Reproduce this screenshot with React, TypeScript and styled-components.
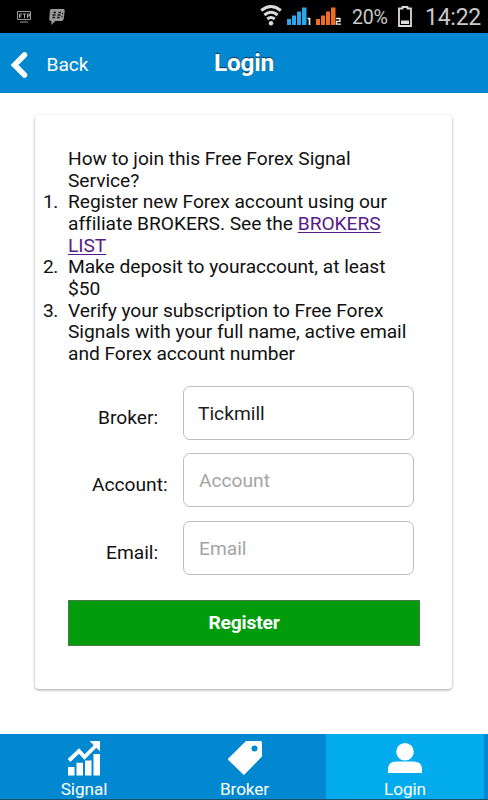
import React from "react";
import styled, { createGlobalStyle } from "styled-components";

const GlobalStyle = createGlobalStyle`
  * { box-sizing: border-box; }
  body { margin: 0; background: #fff; font-family: Roboto, sans-serif; color: #111; }
`;

const Screen = styled.div`
  width: 488px;
  height: 800px;
  display: flex;
  flex-direction: column;
  overflow: hidden;
`;

const StatusBar = styled.div`
  height: 33px;
  flex: none;
  background: #000;
  display: flex;
  justify-content: space-between;
  color: #c9c9c9;
`;

const StatusGroup = styled.div`
  display: flex;
  svg { display: block; flex: none; }
`;

const StatusText = styled.span<{ $size: number; $left: number; $width: number }>`
  font-size: ${(p) => p.$size}px;
  line-height: 35px;
  letter-spacing: -0.25px;
  margin-left: ${(p) => p.$left}px;
  width: ${(p) => p.$width}px;
  white-space: nowrap;
`;

const Header = styled.header`
  height: 60px;
  flex: none;
  background: #0288d1;
  border-bottom: 1px solid #0784cb;
  color: #fff;
  display: grid;
  grid-template-columns: 1fr auto 1fr;
`;

const BackButton = styled.button`
  border: 0;
  padding: 1px 0 0 10px;
  background: none;
  color: #fff;
  display: flex;
  align-items: center;
  gap: 18.5px;
  font: 400 19.2px/61px Roboto, sans-serif;
  letter-spacing: -0.05px;
`;

const Title = styled.h1`
  margin: 0;
  font-size: 24.4px;
  line-height: 59px;
  letter-spacing: -0.2px;
  font-weight: 700;
  text-shadow: 0 -1px 1px #12324a;
`;

const Card = styled.main`
  width: 417px;
  height: 574px;
  margin: 22px 0 0 35px;
  padding: 33px 33px 0;
  border-radius: 4px;
  box-shadow: 0 1px 3px rgba(0, 0, 0, 0.38);
  flex: none;
`;

const Instructions = styled.div`
  font-size: 19.2px;
  letter-spacing: -0.035px;
  line-height: 21.67px;
  white-space: nowrap;
  p { margin: 0; }
`;

const Steps = styled.ol`
  margin: 0;
  padding: 0;
  list-style: none;
`;

const Step = styled.li`
  display: grid;
  grid-template-columns: 25px 1fr;
  margin-left: -25px;
`;

const Marker = styled.span`
  letter-spacing: -0.6px;
`;

const Line = styled.span`
  display: block;
`;

const BrokerLink = styled.a`
  color: #551a8b;
  text-decoration: underline;
  text-decoration-thickness: 1px;
  text-underline-offset: 2px;
`;

const Form = styled.form`
  margin-top: 21px;
  display: grid;
  gap: 13.7px;
`;

const Field = styled.label`
  display: grid;
  grid-template-columns: 115px 231px;
  height: 54px;
  font-size: 19.2px;
`;

const FieldName = styled.span<{ $indent: number }>`
  padding-left: ${(p) => p.$indent}px;
  line-height: 63px;
`;

const Input = styled.input`
  width: 231px;
  height: 54px;
  padding: 1px 15px 0 14px;
  border: 1px solid #bdbdbd;
  border-radius: 7px;
  background: #fff;
  color: #1c1c1c;
  font: 400 19.2px Roboto, sans-serif;
  outline: none;
  &::placeholder { color: #a4a4a4; opacity: 1; text-indent: 1px; }
`;

const Submit = styled.button`
  width: 352px;
  height: 46px;
  margin-top: 11px;
  padding: 0;
  border: 1px solid #4d7a4d;
  background: #019c0b;
  color: #fff;
  font: 700 19.2px Roboto, sans-serif;
  letter-spacing: -0.15px;
`;

const TabBar = styled.nav`
  margin-top: auto;
  height: 66px;
  flex: none;
  background: #0288d1;
  border-bottom: 1px solid #18536f;
  display: grid;
  grid-template-columns: 163px 163px 158px;
`;

const Tab = styled.div<{ $active?: boolean; $shift?: number }>`
  background: ${(p) => (p.$active ? "#02abee" : "transparent")};
  color: #fff;
  display: flex;
  flex-direction: column;
  align-items: center;
  padding: 7px 0 0 ${(p) => p.$shift ?? 0}px;
  font-size: 17.2px;
  letter-spacing: -0.1px;
  line-height: 20px;
  svg { display: block; margin-bottom: 2px; flex: none; }
`;

const NoticeIcons = () => (
  <svg width="70" height="33" fill="#999">
    <path d="M17.500 11.500h13v8h-13zM20 22h8" fill="none" stroke="#999" />
    <path d="M19.500 18v-4h2.500M19.500 16h2M23 14h3M24.500 14v4M27.500 18v-4h2v2h-2" fill="none" stroke="#aaa" />
    <path d="M51 9h12q2 0 1.700 2l-1 8q-.3 2-2.300 2h-6l-4 4v-4q-2.400 0-2.200-2l.7-8q.2-2 1.100-2z" />
    <path d="M53.500 12.500h2.500M58.500 12.500h2.500M52.500 15h3M57.500 15h3M52.500 17.500h2.500M57 17.500h2.500M62 13.500h1M61.500 16.500h1" stroke="#111" strokeWidth="1.300" />
  </svg>
);

const WifiIcon = () => (
  <svg width="24" height="33" fill="none" stroke="#ddd" strokeWidth="3">
    <path d="M1.200 10.500Q11 2.500 20.800 10.500M4.400 15Q11 9.500 17.600 15M7.300 19Q11 16 14.700 19" />
    <circle cx="11" cy="23.200" r="2.200" fill="#ddd" stroke="none" />
  </svg>
);

const SignalBars = ({ color, slot }: { color: string; slot: string }) => (
  <svg width="29" height="33">
    <path fill={color} d="M3 19h4v6H3zM8 15.500h4V25H8zM13 11.500h4V25h-4zM18 7.500h4.500V25H18z" />
    {slot === "1" ? (
      <path d="M23.500 18.500h2V25" fill="none" stroke="#eee" strokeWidth="1.700" />
    ) : (
      <path d="M23 18.500h4v2.800h-3.500v2.900H28" fill="none" stroke="#eee" strokeWidth="1.300" />
    )}
  </svg>
);

const BatteryIcon = () => (
  <svg width="16" height="33">
    <path d="M2 8.500h3.500V7h5v1.500H14V26H2z" fill="none" stroke="#ddd" strokeWidth="1.800" />
    <path d="M4 20.500h8V24H4z" fill="#ddd" />
  </svg>
);

const GrowthIcon = () => (
  <svg width="34" height="36" fill="#fff">
    <path d="M1 26h6.500v8.500H1zM9.500 21.800H16v12.700H9.500zM18 19.500h6.500v15H18zM26.500 13H33v21.500h-6.500z" />
    <path d="M2 19.500L12 10l5.500 6L29 4.500" fill="none" stroke="#fff" strokeWidth="3.800" />
    <path d="M22.500 0H33v10.500z" />
  </svg>
);

const TagIcon = () => (
  <svg width="34" height="36" fill="#fff">
    <path fillRule="evenodd" d="M18 0H32.500q1.500 0 1.500 1.500V15.500L16.500 33.500Q16 34.200 15.300 33.500L.3 19Q-.3 18.200 .3 17.500zM26.500 4.500a3 3 0 1 0 0 6 3 3 0 0 0 0-6z" />
  </svg>
);

const PersonIcon = () => (
  <svg width="34" height="36" fill="#fff">
    <circle cx="17" cy="10.700" r="8.800" />
    <path d="M0 32v-3.500Q0 20.500 8 20.500h18q8 0 8 8V32z" />
  </svg>
);

export default function App() {
  return (
    <>
      <GlobalStyle />
      <Screen>
        <StatusBar>
          <StatusGroup><NoticeIcons /></StatusGroup>
          <StatusGroup>
            <WifiIcon />
            <SignalBars color="#2aa6ec" slot="1" />
            <SignalBars color="#ef6d20" slot="2" />
            <StatusText $size={19.6} $left={10} $width={45}>20%</StatusText>
            <BatteryIcon />
            <StatusText $size={23} $left={12} $width={63}>14:22</StatusText>
          </StatusGroup>
        </StatusBar>
        <Header>
          <BackButton>
            <svg width="18" height="28" fill="none" stroke="#fff" strokeWidth="5.500" strokeLinecap="round" strokeLinejoin="miter">
              <path d="M14.500 4L4.500 14l10 10" />
            </svg>
            Back
          </BackButton>
          <Title>Login</Title>
        </Header>
        <Card>
          <Instructions>
            <p>
              <Line>How to join this Free Forex Signal</Line>
              <Line>Service?</Line>
            </p>
            <Steps>
              <Step>
                <Marker>1.</Marker>
                <div>
                  <Line>Register new Forex account using our</Line>
                  <Line>affiliate BROKERS. See the <BrokerLink>BROKERS</BrokerLink></Line>
                  <Line><BrokerLink>LIST</BrokerLink></Line>
                </div>
              </Step>
              <Step>
                <Marker>2.</Marker>
                <div>
                  <Line>Make deposit to youraccount, at least</Line>
                  <Line>$50</Line>
                </div>
              </Step>
              <Step>
                <Marker>3.</Marker>
                <div>
                  <Line>Verify your subscription to Free Forex</Line>
                  <Line>Signals with your full name, active email</Line>
                  <Line>and Forex account number</Line>
                </div>
              </Step>
            </Steps>
          </Instructions>
          <Form onSubmit={(e) => e.preventDefault()}>
            <Field>
              <FieldName $indent={30}>Broker:</FieldName>
              <Input defaultValue="Tickmill" />
            </Field>
            <Field>
              <FieldName $indent={24}>Account:</FieldName>
              <Input placeholder="Account" />
            </Field>
            <Field>
              <FieldName $indent={38}>Email:</FieldName>
              <Input placeholder="Email" />
            </Field>
            <Submit type="submit">Register</Submit>
          </Form>
        </Card>
        <TabBar>
          <Tab $shift={5}><GrowthIcon />Signal</Tab>
          <Tab><TagIcon />Broker</Tab>
          <Tab $active><PersonIcon />Login</Tab>
        </TabBar>
      </Screen>
    </>
  );
}
